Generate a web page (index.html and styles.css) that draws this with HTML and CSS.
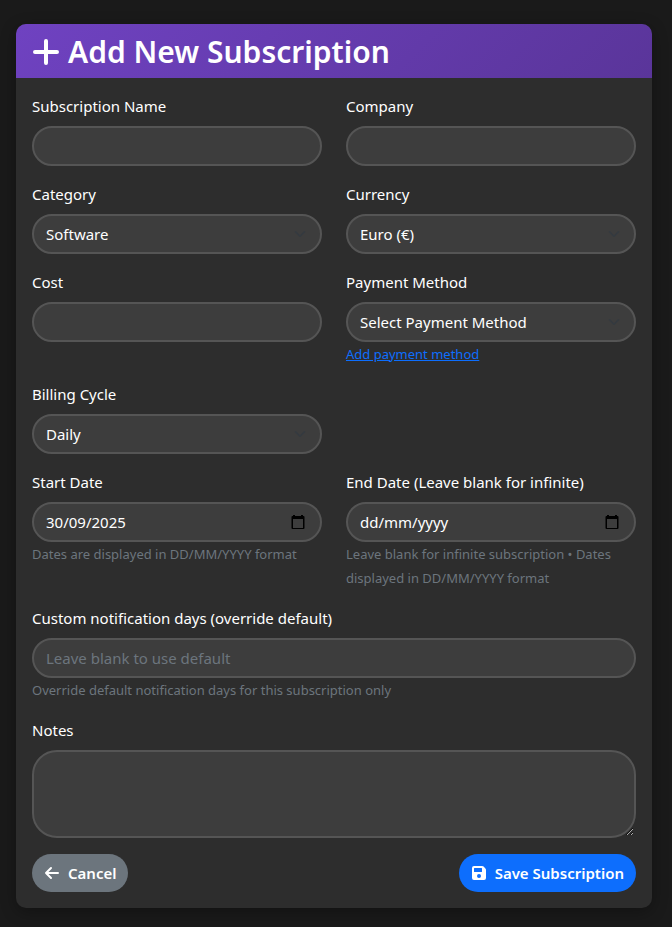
FILE: index.html
```html
<!DOCTYPE html>
<html lang="en-GB">
<head>
<meta charset="utf-8">
<meta name="viewport" content="width=device-width, initial-scale=1">
<title>Add New Subscription</title>
<link rel="stylesheet" href="styles.css">
</head>
<body>
<svg class="sprite" aria-hidden="true">
  <symbol id="chevron" viewBox="0 0 16 16"><path d="m2 5 6 6 6-6" fill="none" stroke="currentColor" stroke-width="2" stroke-linecap="round" stroke-linejoin="round"/></symbol>
  <symbol id="calendar" viewBox="0 0 16 16"><path fill="currentColor" fill-rule="evenodd" d="M3 1h2v1h6V1h2v1h.5a1 1 0 0 1 1 1v11a1 1 0 0 1-1 1h-11a1 1 0 0 1-1-1V3a1 1 0 0 1 1-1H3zM3 5v9h10V5z"/></symbol>
</svg>
<main class="card">
  <header class="card-header">
    <h1 class="title">
      <svg class="title-icon" viewBox="0 0 28 28" aria-hidden="true"><path d="M14 3v22M3 14h22" fill="none" stroke="currentColor" stroke-width="4" stroke-linecap="round"/></svg>
      Add New Subscription
    </h1>
  </header>
  <form class="form">
    <div class="grid">
      <div class="field">
        <label for="name">Subscription Name</label>
        <input class="control" id="name" type="text">
      </div>
      <div class="field">
        <label for="company">Company</label>
        <input class="control" id="company" type="text">
      </div>
      <div class="field">
        <label for="category">Category</label>
        <div class="stack">
          <select class="control" id="category"><option>Software</option></select>
          <svg class="chevron" aria-hidden="true"><use href="#chevron"/></svg>
        </div>
      </div>
      <div class="field">
        <label for="currency">Currency</label>
        <div class="stack">
          <select class="control" id="currency"><option>Euro (€)</option></select>
          <svg class="chevron" aria-hidden="true"><use href="#chevron"/></svg>
        </div>
      </div>
      <div class="field">
        <label for="cost">Cost</label>
        <input class="control" id="cost" type="text" inputmode="decimal">
      </div>
      <div class="field">
        <label for="payment">Payment Method</label>
        <div class="stack">
          <select class="control" id="payment"><option>Select Payment Method</option></select>
          <svg class="chevron" aria-hidden="true"><use href="#chevron"/></svg>
        </div>
        <div class="help"><a href="#">Add payment method</a></div>
      </div>
      <div class="field start-row">
        <label for="cycle">Billing Cycle</label>
        <div class="stack">
          <select class="control" id="cycle"><option>Daily</option></select>
          <svg class="chevron" aria-hidden="true"><use href="#chevron"/></svg>
        </div>
      </div>
      <div class="field start-row">
        <label for="start">Start Date</label>
        <div class="stack">
          <input class="control" id="start" type="text" value="30/09/2025" placeholder="dd/mm/yyyy">
          <button class="picker" type="button" aria-label="Choose start date"><svg class="calendar" aria-hidden="true"><use href="#calendar"/></svg></button>
        </div>
        <div class="help">Dates are displayed in DD/MM/YYYY format</div>
      </div>
      <div class="field">
        <label for="end">End Date (Leave blank for infinite)</label>
        <div class="stack">
          <input class="control date-empty" id="end" type="text" placeholder="dd/mm/yyyy">
          <button class="picker" type="button" aria-label="Choose end date"><svg class="calendar" aria-hidden="true"><use href="#calendar"/></svg></button>
        </div>
        <div class="help">Leave blank for infinite subscription • Dates displayed in DD/MM/YYYY format</div>
      </div>
      <div class="field wide">
        <label for="days">Custom notification days (override default)</label>
        <input class="control" id="days" type="text" inputmode="numeric" placeholder="Leave blank to use default">
        <div class="help">Override default notification days for this subscription only</div>
      </div>
      <div class="field wide">
        <label for="notes">Notes</label>
        <textarea class="control notes" id="notes"></textarea>
      </div>
    </div>
    <div class="actions">
      <button class="btn cancel" type="button">
        <svg class="btn-icon" viewBox="0 0 16 16" aria-hidden="true"><path d="M7 3 2 8l5 5M2 8h12" fill="none" stroke="currentColor" stroke-width="2" stroke-linecap="round" stroke-linejoin="round"/></svg>
        Cancel
      </button>
      <button class="btn save" type="submit">
        <svg class="btn-icon" viewBox="0 0 16 16" aria-hidden="true"><path fill="currentColor" fill-rule="evenodd" d="M3 1h8.200a2 2 0 0 1 1.400.6l1.800 1.800a2 2 0 0 1 .6 1.400V13a2 2 0 0 1-2 2H3a2 2 0 0 1-2-2V3a2 2 0 0 1 2-2zM3.500 3a.5.5 0 0 0-.5.5v3a.5.5 0 0 0 .5.5h7a.5.5 0 0 0 .5-.5v-3a.5.5 0 0 0-.5-.5zM8 9a2 2 0 1 0 0 4 2 2 0 0 0 0-4z"/></svg>
        Save Subscription
      </button>
    </div>
  </form>
</main>
</body>
</html>
```

FILE: styles.css
```css
* {
  box-sizing: border-box;
}

body {
  margin: 0;
  padding: 24px 20px 19px 16px;
  background: #1a1a1a;
  color: #fff;
  font: 15px/24px "Segoe UI", "Noto Sans", "Open Sans", sans-serif;
}

.sprite {
  display: none;
}

.card {
  border-radius: 10px;
  background: #2d2d2d;
  box-shadow: 0 4px 16px rgba(0, 0, 0, 0.3);
}

.card-header {
  padding: 9px 16px 7px;
  border-radius: 10px 10px 0 0;
  background: linear-gradient(135deg, #6f42c1, #5a359a);
}

.title {
  display: flex;
  align-items: center;
  gap: 8px;
  margin: 0;
  font-size: 30px;
  font-weight: 600;
  line-height: 38px;
}

.title-icon {
  width: 28px;
  height: 28px;
}

.form {
  padding: 16px;
}

.grid {
  display: grid;
  grid-template-columns: 1fr 1fr;
  gap: 16px 24px;
}

.field {
  min-width: 0;
}

.start-row {
  grid-column-start: 1;
}

.wide {
  grid-column: 1 / -1;
}

label {
  display: block;
  margin-bottom: 8px;
}

.stack {
  display: grid;
  align-items: center;
}

.stack > * {
  grid-area: 1 / 1;
}

.control {
  display: block;
  width: 100%;
  height: 40px;
  margin: 0;
  padding: 0 12px;
  border: 2px solid #555;
  border-radius: 20px;
  outline: 0;
  background: #3d3d3d;
  color: #fff;
  font: inherit;
  appearance: none;
}

.control:focus {
  border-color: #6f42c1;
}

.control::placeholder {
  color: #6c757d;
  opacity: 1;
}

.date-empty::placeholder {
  color: #fff;
}

.notes {
  height: 88px;
  padding: 6px 12px;
  border-radius: 25px;
  resize: vertical;
}

.chevron {
  justify-self: end;
  width: 16px;
  height: 12px;
  margin-right: 14px;
  color: #343a40;
  pointer-events: none;
}

.picker {
  display: flex;
  justify-self: end;
  margin-right: 16px;
  padding: 0;
  border: 0;
  background: none;
  color: #000;
}

.calendar {
  width: 16px;
  height: 16px;
}

.help {
  color: #6c757d;
  font-size: 13px;
}

a {
  color: #0d6efd;
}

.actions {
  display: flex;
  justify-content: space-between;
  margin-top: 16px;
}

.btn {
  display: flex;
  align-items: center;
  gap: 8px;
  height: 38px;
  padding: 0 12px;
  border: 0;
  border-radius: 20px;
  color: #fff;
  font: inherit;
  font-weight: 600;
}

.btn-icon {
  width: 16px;
  height: 16px;
}

.cancel {
  background: #6c757d;
}

.save {
  background: #0d6efd;
}
```
